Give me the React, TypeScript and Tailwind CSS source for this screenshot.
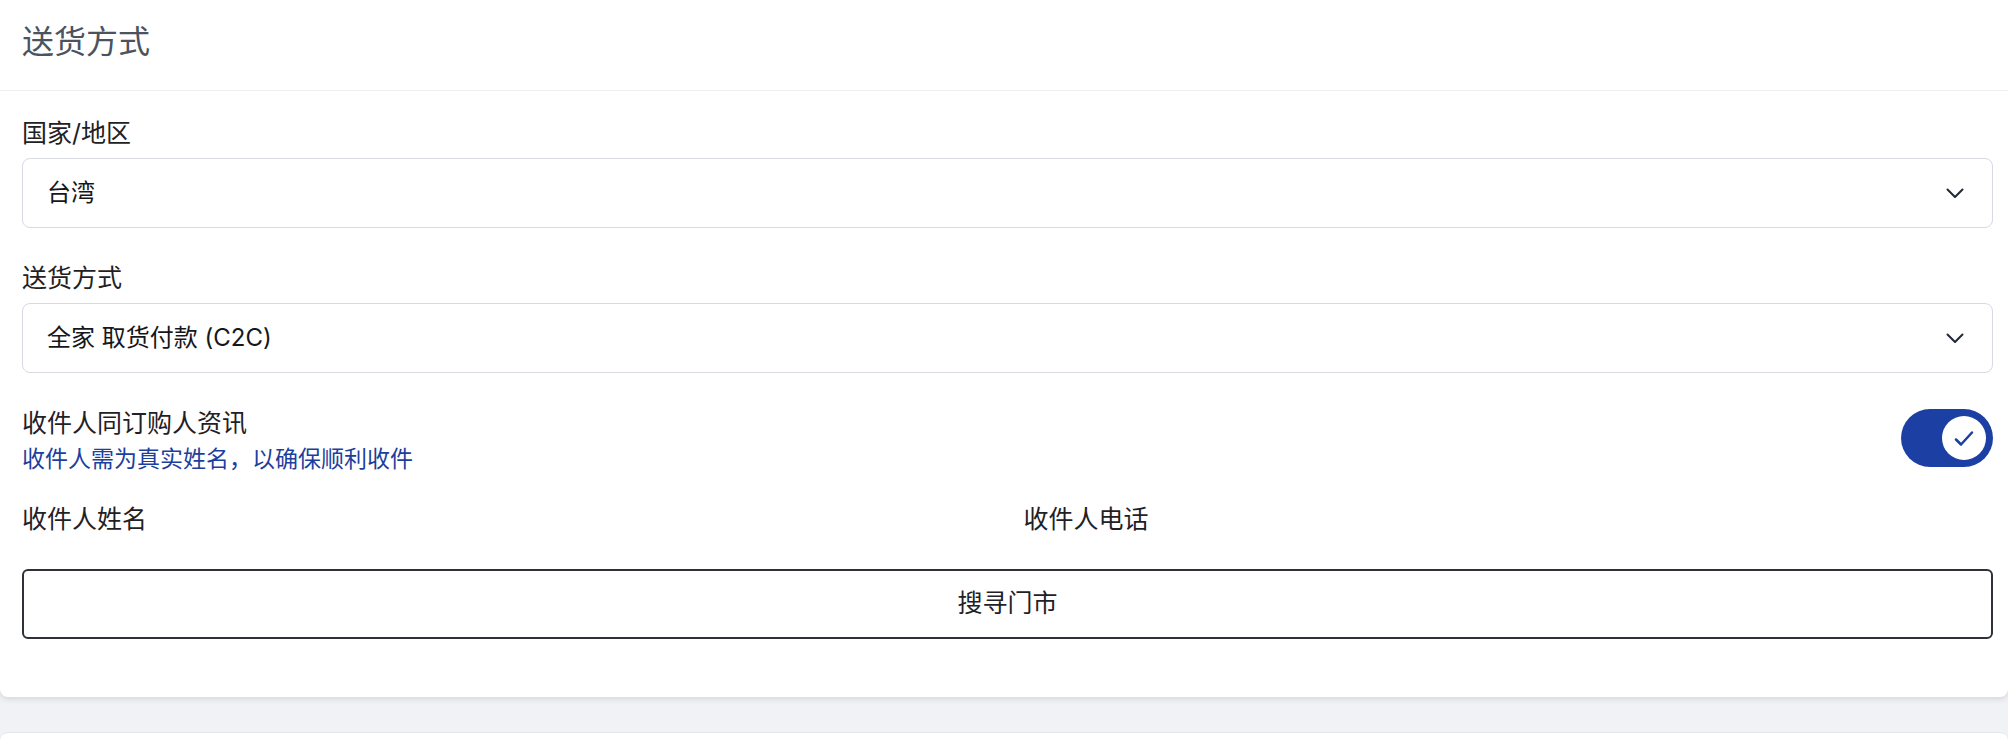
import React, { useState } from 'react';

const FONT = "font-['Inter','Noto_Sans_CJK_SC',sans-serif]";

function Chevron() {
    return (
        <svg width="18" height="11" viewBox="0 0 18 11" fill="none" className="text-[#1f2937]">
            <path d="M1.5 1.5 9 9l7.5-7.5" stroke="currentColor" strokeWidth="2" strokeLinecap="round" strokeLinejoin="round" />
        </svg>
    );
}

interface SelectFieldProps {
    label: string;
    value: string;
}

function SelectField({ label, value }: SelectFieldProps) {
    return (
        <div className="flex flex-col">
            <label className="text-[25px] leading-[36px] text-[#1f2124] mb-[7px]">{label}</label>
            <div className="h-[70px] flex items-center justify-between border border-[#d8dae3] rounded-lg bg-white pl-6 pr-[28px]">
                <span className="text-[24px] text-[#15171a]">{value}</span>
                <Chevron />
            </div>
        </div>
    );
}

function Toggle() {
    const [on, setOn] = useState(true);
    return (
        <button
            onClick={() => setOn(!on)}
            className={`w-[92px] h-[58px] rounded-full p-[7px] flex items-center shrink-0 ${on ? 'bg-[#1b3fa3] justify-end' : 'bg-gray-300 justify-start'}`}
        >
            <span className="w-[44px] h-[44px] rounded-full bg-white flex items-center justify-center">
                {on && (
                    <svg width="20" height="17" viewBox="0 0 20 17" fill="none" className="text-[#1b3fa3]">
                        <path d="M2 9.5 7 14.5 18 2.5" stroke="currentColor" strokeWidth="2.5" strokeLinecap="round" strokeLinejoin="round" />
                    </svg>
                )}
            </span>
        </button>
    );
}

export default function App() {
    return (
        <div className={`min-h-[748px] bg-[#f1f2f5] ${FONT}`}>
            <div className="bg-white rounded-b-lg shadow-[0_2px_6px_rgba(0,0,0,0.12)]">
                <div className="h-[91px] flex items-center pl-[22px] pr-[15px] border-b border-[#f0f0f2]">
                    <h2 className="text-[32px] text-[#4b5260] pb-[6px]">送货方式</h2>
                </div>

                <div className="pl-[22px] pr-[15px] pt-6 pb-[58px] flex flex-col">
                    <SelectField label="国家/地区" value="台湾" />
                    <div className="mt-8">
                        <SelectField label="送货方式" value="全家 取货付款 (C2C)" />
                    </div>

                    <div className="mt-8 flex items-center justify-between">
                        <div className="flex flex-col">
                            <span className="text-[25px] leading-[36px] text-[#1f2124]">收件人同订购人资讯</span>
                            <span className="text-[23px] leading-[36px] text-[#1c3f9e]">收件人需为真实姓名，以确保顺利收件</span>
                        </div>
                        <div className="-mt-[6px]">
                            <Toggle />
                        </div>
                    </div>

                    <div className="mt-6 grid grid-cols-2 gap-8">
                        <span className="text-[25px] leading-[36px] text-[#1f2124]">收件人姓名</span>
                        <span className="text-[25px] leading-[36px] text-[#1f2124]">收件人电话</span>
                    </div>

                    <button className="mt-8 h-[70px] w-full border-2 border-[#2f3139] rounded-md bg-white text-[25px] text-[#1f2126]">
                        搜寻门市
                    </button>
                </div>
            </div>

            <div className="mt-[35px] h-[40px] bg-white border-t border-[#e4e5ea] rounded-t-lg" />
        </div>
    );
}
